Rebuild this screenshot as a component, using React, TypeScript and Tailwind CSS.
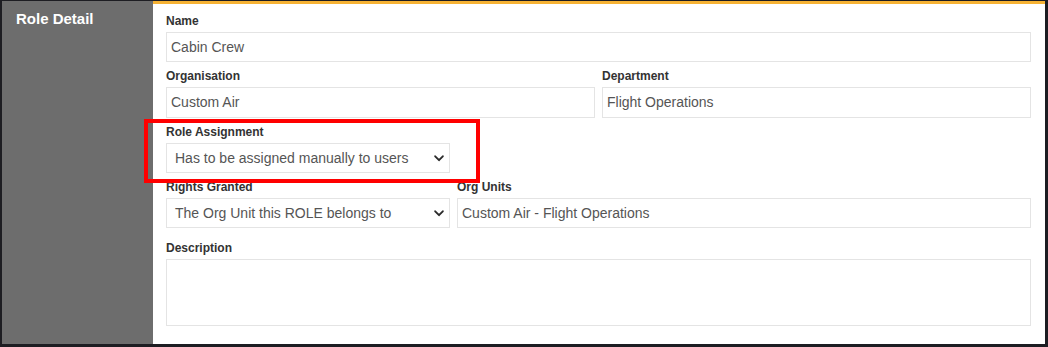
import React from "react";

const Label = ({ children }: { children: React.ReactNode }) => (
  <div className="text-[12px] leading-[14px] font-bold text-[#333333] mb-[4px]">{children}</div>
);

const Chevron = () => (
  <svg width="10" height="7" viewBox="0 0 10 7" className="shrink-0">
    <path d="M1.2 1.3 L5 5.2 L8.8 1.3" fill="none" stroke="#2b2b2b" strokeWidth="1.9" strokeLinecap="round" strokeLinejoin="round" />
  </svg>
);

const Input = ({ value, h = "h-[30px]" }: { value: string; h?: string }) => (
  <div className={`${h} border border-[#e4e4e4] bg-white flex items-center pl-[4px] text-[14px] text-[#555555]`}>{value}</div>
);

const Select = ({ value }: { value: string }) => (
  <div className="h-[30px] border border-[#e4e4e4] bg-white flex items-center justify-between pl-[8px] pr-[5px] text-[14px] text-[#555555]">
    <span>{value}</span>
    <Chevron />
  </div>
);

export default function App() {
  return (
    <div
      className="w-[1048px] h-[347px] border-t border-l-2 border-r-[3px] border-b-[3px] border-[#1d1d22] flex bg-white"
      style={{ fontFamily: '"Liberation Sans", Arial, sans-serif' }}
    >
      <div className="w-[151px] shrink-0 bg-[#6d6d6d] pl-[14px] pt-[9px]">
        <div className="text-[15px] leading-[18px] font-bold text-white">Role Detail</div>
      </div>
      <div className="flex-1 flex flex-col">
        <div className="h-[3px] bg-[#f6b234]" />
        <div className="pl-[13px] pr-[14px] pt-[10px] flex flex-col">
          <div>
            <Label>Name</Label>
            <Input value="Cabin Crew" />
          </div>
          <div className="mt-[7px] grid grid-cols-2 gap-x-[7px]">
            <div>
              <Label>Organisation</Label>
              <Input value="Custom Air" h="h-[31px]" />
            </div>
            <div>
              <Label>Department</Label>
              <Input value="Flight Operations" h="h-[31px]" />
            </div>
          </div>
          <div className="mt-[7px] w-[284px] relative">
            <Label>Role Assignment</Label>
            <Select value="Has to be assigned manually to users" />
            <div className="absolute left-[-22px] top-[-6px] w-[336px] h-[64px] border-[4px] border-[#ff0000]" />
          </div>
          <div className="mt-[7px] grid grid-cols-[284px_1fr] gap-x-[7px]">
            <div>
              <Label>Rights Granted</Label>
              <Select value="The Org Unit this ROLE belongs to" />
            </div>
            <div>
              <Label>Org Units</Label>
              <Input value="Custom Air - Flight Operations" />
            </div>
          </div>
          <div className="mt-[13px]">
            <Label>Description</Label>
            <div className="h-[67px] border border-[#e4e4e4] bg-white" />
          </div>
        </div>
      </div>
    </div>
  );
}
